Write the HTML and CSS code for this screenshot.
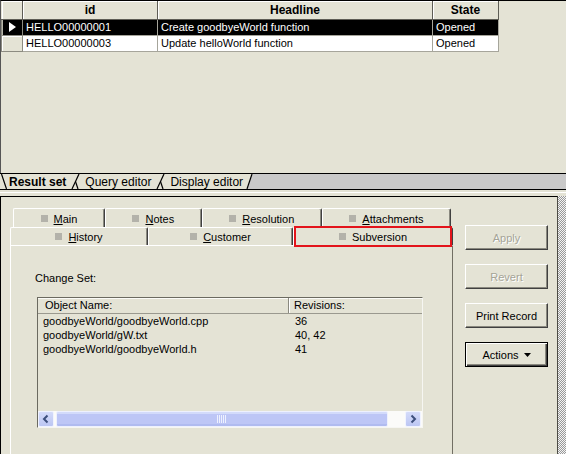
FILE: index.html
```html
<!DOCTYPE html>
<html>
<head>
<meta charset="utf-8">
<link rel="stylesheet" href="styles.css">
</head>
<body>
<div class="app">
  <div class="results">
    <table class="grid">
      <colgroup><col class="c-rh"><col class="c-id"><col class="c-hl"><col class="c-st"></colgroup>
      <thead>
        <tr><th class="rh"></th><th>id</th><th>Headline</th><th>State</th></tr>
      </thead>
      <tbody>
        <tr class="sel">
          <td class="rh"><svg class="tri" width="7" height="10" viewBox="0 0 7 10"><polygon points="0,0 7,5 0,10" fill="#fff"/></svg></td>
          <td>HELLO00000001</td><td>Create goodbyeWorld function</td><td>Opened</td>
        </tr>
        <tr>
          <td class="rh"></td>
          <td>HELLO00000003</td><td>Update helloWorld function</td><td>Opened</td>
        </tr>
      </tbody>
    </table>
  </div>

  <div class="sheettabs">
    <svg class="edge first" width="8" height="15" viewBox="0 0 8 15"><line x1="1.5" y1="0" x2="6.5" y2="15"/></svg>
    <span class="stab active">Result set</span>
    <svg class="edge" width="17" height="15" viewBox="0 0 17 15"><line x1="12" y1="0" x2="5" y2="15"/><line x1="8.5" y1="7.5" x2="11" y2="15"/></svg>
    <span class="stab">Query editor</span>
    <svg class="edge" width="17" height="15" viewBox="0 0 17 15"><line x1="12" y1="0" x2="5" y2="15"/><line x1="8.5" y1="7.5" x2="11" y2="15"/></svg>
    <span class="stab">Display editor</span>
    <svg class="edge last" width="10" height="15" viewBox="0 0 10 15"><polygon points="8,0 10,0 10,15 3,15" fill="#c9c9c9"/><line x1="8" y1="0" x2="3" y2="15"/></svg>
    <div class="strip"></div>
  </div>

  <div class="sep"></div>

  <div class="lower">
    <div class="panel">
      <div class="tabctl">
        <div class="tabrow back">
          <div class="tab"><span class="sq"></span><span><u>M</u>ain</span></div>
          <div class="tab"><span class="sq"></span><span><u>N</u>otes</span></div>
          <div class="tab"><span class="sq"></span><span><u>R</u>esolution</span></div>
          <div class="tab"><span class="sq"></span><span><u>A</u>ttachments</span></div>
        </div>
        <div class="tabrow front">
          <div class="tab t-history"><span class="sq"></span><span><u>H</u>istory</span></div>
          <div class="tab t-customer"><span class="sq"></span><span><u>C</u>ustomer</span></div>
          <div class="tab t-subversion current"><span class="sq"></span><span>Subversion</span></div>
        </div>
        <div class="page">
          <div class="label">Change Set:</div>
          <div class="list">
            <div class="lhead">
              <div class="hc c1">Object Name:</div>
              <div class="hc c2">Revisions:</div>
            </div>
            <div class="rows">
              <div class="row"><div class="c1">goodbyeWorld/goodbyeWorld.cpp</div><div class="c2">36</div></div>
              <div class="row"><div class="c1">goodbyeWorld/gW.txt</div><div class="c2">40, 42</div></div>
              <div class="row"><div class="c1">goodbyeWorld/goodbyeWorld.h</div><div class="c2">41</div></div>
            </div>
            <div class="hscroll">
              <div class="sbtn"><svg width="14" height="14" viewBox="0 0 14 14"><polyline points="8.5,3.5 5,7 8.5,10.5" fill="none" stroke="#3d4f7c" stroke-width="2"/></svg></div>
              <div class="thumb"><span class="grip"></span></div>
              <div class="track"></div>
              <div class="sbtn"><svg width="14" height="14" viewBox="0 0 14 14"><polyline points="5.5,3.5 9,7 5.5,10.5" fill="none" stroke="#3d4f7c" stroke-width="2"/></svg></div>
            </div>
          </div>
        </div>
      </div>
      <div class="actions">
        <div class="btn disabled">Apply</div>
        <div class="btn disabled">Revert</div>
        <div class="btn">Print Record</div>
        <div class="btn default">Actions <svg class="caret" width="7" height="4" viewBox="0 0 7 4"><polygon points="0,0 7,0 3.5,4" fill="#000"/></svg></div>
      </div>
    </div>
    <div class="dither"></div>
  </div>
</div>
</body>
</html>
```
FILE: styles.css
```css
* { box-sizing: border-box; }
html, body { margin: 0; padding: 0; }
body {
  width: 566px;
  height: 454px;
  overflow: hidden;
  background: #e4e3d5;
  font-family: "Liberation Sans", Arial, sans-serif;
  font-size: 11px;
  color: #000;
}
.app { display: flex; flex-direction: column; height: 454px; }

/* ---------- result grid ---------- */
.results {
  height: 173px;
  border-top: 1px solid #000;
  border-left: 1px solid #555;
}
.grid {
  border-collapse: collapse;
  table-layout: fixed;
  width: 497px;
}
.c-rh { width: 21px; }
.c-id { width: 135px; }
.c-hl { width: 275px; }
.c-st { width: 66px; }
.grid th {
  height: 18px;
  padding: 0;
  font-size: 12px;
  font-weight: bold;
  text-align: center;
  background: #e4e3d5;
  border-right: 1px solid #5e5d55;
  border-bottom: 1px solid #5e5d55;
  box-shadow: inset 1px 1px #fff;
  line-height: 16px;
}
.grid td {
  height: 16px;
  padding: 0 0 0 3px;
  border: 1px solid #a6a59b;
  background: #fff;
  white-space: nowrap;
  overflow: hidden;
  line-height: 14px;
}
.grid td.rh {
  background: #e4e3d5;
  padding: 0;
  border-color: #8c8b81;
  box-shadow: inset 1px 1px #fff;
}
.grid tr.sel td { background: #000; color: #fff; }
.grid tr.sel td.rh { background: #000; box-shadow: inset 1px 0 #b8b7ab; text-align: center; }
.tri { display: block; margin: 0 0 0 7px; }

/* ---------- sheet tabs ---------- */
.sheettabs {
  height: 17px;
  display: flex;
  align-items: stretch;
  border-top: 1px solid #000;
  border-bottom: 1px solid #000;
  font-size: 12px;
  line-height: 16px;
}
.edge { display: block; flex: none; }
.edge line { stroke: #000; stroke-width: 1.2; }
.stab { flex: none; padding: 0 1px; white-space: nowrap; }
.stab.active { font-weight: bold; }
.strip { flex: 1; background: #c9c9c9; }

.sep { height: 6px; border-top: 2px solid #e4e3d5; box-shadow: inset 0 1px #fff; }

/* ---------- lower panel ---------- */
.lower { flex: 1; display: flex; min-height: 0; }
.panel {
  flex: 1;
  display: flex;
  align-items: stretch;
  border-top: 1px solid #000;
  border-left: 1px solid #000;
  border-right: 1px solid #4d4c45;
  padding: 11px 0 0 9px;
}
.dither {
  width: 8px;
  background: repeating-conic-gradient(#9a9a9a 0 25%, #f4f4f4 0 50%) 0 0 / 2px 2px;
}

.tabctl {
  width: 443px;
  display: flex;
  flex-direction: column;
}
.tabrow { display: flex; }
.tabrow.back { height: 19px; margin: 0 2px 0 3px; }
.tabrow.front { height: 18px; }
.tab {
  flex: 1 1 auto;
  display: flex;
  align-items: center;
  justify-content: center;
  gap: 6px;
  border: 1px solid #fff;
  border-right-color: #404040;
  border-bottom: none;
  border-radius: 2px 2px 0 0;
  box-shadow: inset -1px 0 #8a897f;
  white-space: nowrap;
}
.tabrow.back .tab { padding-top: 1px; }
.tabrow.front .t-history { flex: 0 0 138px; }
.tabrow.front .t-customer { flex: 0 0 145px; }
.tabrow.front .t-subversion { flex: 1 1 auto; }
.tab.current { position: relative; }
.tab.current::after {
  content: "";
  position: absolute;
  left: 0;
  right: 0;
  top: -2px;
  bottom: -2px;
  border: 2px solid #e3141b;
}
.sq { width: 7px; height: 7px; background: #b3b2aa; flex: none; }
u { text-decoration: underline; text-underline-offset: 1px; }

.page {
  flex: 1;
  border-top: 1px solid #fff;
  border-left: 1px solid #fff;
  border-right: 1px solid #716f64;
  padding: 25px 0 0 24px;
}
.label { line-height: 14px; }

.list {
  margin: 12px 0 0 2px;
  width: 386px;
  height: 131px;
  display: flex;
  flex-direction: column;
  border-top: 1px solid #6b6a60;
  border-left: 1px solid #6b6a60;
  border-right: 1px solid #f6f6f2;
  border-bottom: 1px solid #f6f6f2;
}
.lhead {
  height: 16px;
  display: flex;
  border-bottom: 1px solid #9a998f;
  box-shadow: inset 0 1px #fbfbf7;
  line-height: 15px;
}
.hc.c1 { width: 251px; padding-left: 7px; border-right: 1px solid #8a897f; }
.hc.c2 { flex: 1; padding-left: 5px; box-shadow: inset 1px 0 #fff; }
.rows { flex: 1; }
.row { display: flex; height: 14px; line-height: 14px; }
.row .c1 { width: 251px; padding-left: 5px; }
.row .c2 { padding-left: 6px; }

.hscroll {
  height: 16px;
  display: flex;
  align-items: stretch;
  background: #fbfbf9;
  padding-right: 1px;
}
.sbtn {
  width: 16px;
  display: flex;
  align-items: center;
  justify-content: center;
  background: linear-gradient(#d4dbfa, #bcc6f3);
  border: 1px solid #f0f3ff;
  border-radius: 2px;
}
.thumb {
  width: 332px;
  margin-left: 2px;
  display: flex;
  align-items: center;
  justify-content: center;
  background: linear-gradient(#d3dbfb 0 2px, #bdc6f6 2px 12px, #b0bbf0 12px);
  border: 1px solid #eef1fe;
  border-radius: 2px;
}
.grip {
  width: 10px;
  height: 8px;
  background: repeating-linear-gradient(90deg, #eef1ff 0 1px, transparent 1px 2px);
}
.track { flex: 1; }

/* ---------- buttons ---------- */
.actions {
  width: 83px;
  margin-left: 12px;
  padding-top: 17px;
  display: flex;
  flex-direction: column;
  gap: 14px;
}
.btn {
  height: 25px;
  display: flex;
  align-items: center;
  justify-content: center;
  gap: 5px;
  border: 1px solid;
  border-color: #fff #404040 #404040 #fff;
  box-shadow: inset -1px -1px #8a897f;
  background: #e4e3d5;
  white-space: nowrap;
}
.btn.disabled { color: #a5a497; text-shadow: 1px 1px #fff; }
.btn.default {
  border-color: #000;
  box-shadow: inset 1px 1px #fff, inset -1px -1px #404040, inset -2px -2px #8a897f;
}
.caret { display: block; }
```
